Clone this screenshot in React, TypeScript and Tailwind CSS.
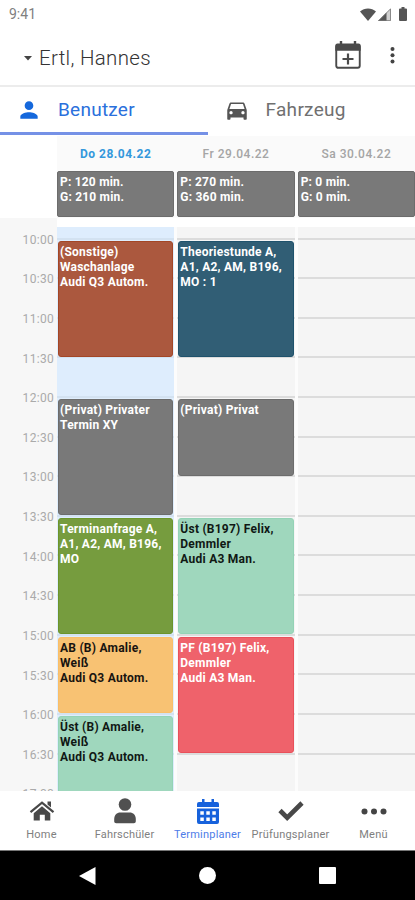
import { MdDirectionsCar, MdPerson } from 'react-icons/md';

type Appointment = {
  lines: string[];
  place: string;
  color: string;
};

type Day = {
  label: string;
  practice: string;
  total: string;
  active?: boolean;
  appointments: Appointment[];
};

const times = [
  '10:00', '10:30', '11:00', '11:30', '12:00', '12:30', '13:00', '13:30',
  '14:00', '14:30', '15:00', '15:30', '16:00', '16:30', '17:00',
];

const slots = [
  'row-start-1', 'row-start-2', 'row-start-3', 'row-start-4', 'row-start-5',
  'row-start-6', 'row-start-7', 'row-start-8', 'row-start-9', 'row-start-10',
  'row-start-11', 'row-start-12', 'row-start-13', 'row-start-14', 'row-start-15',
];

const days: Day[] = [
  {
    label: 'Do 28.04.22',
    practice: '120',
    total: '210',
    active: true,
    appointments: [
      { lines: ['(Sonstige)', 'Waschanlage', 'Audi Q3 Autom.'], place: 'row-start-2 row-span-3', color: 'bg-[#ab583e] border-[#a34626] text-white' },
      { lines: ['(Privat) Privater', 'Termin XY'], place: 'row-start-6 row-span-3', color: 'bg-[#797979] border-[#6c6c6c] text-white' },
      { lines: ['Terminanfrage A,', 'A1, A2, AM, B196,', 'MO'], place: 'row-start-9 row-span-3', color: 'bg-[#769c3e] border-[#6c942b] text-white' },
      { lines: ['AB (B) Amalie,', 'Weiß', 'Audi Q3 Autom.'], place: 'row-start-12 row-span-2', color: 'bg-[#f8c273] border-[#f9be68] text-[#181410]' },
      { lines: ['Üst (B) Amalie,', 'Weiß', 'Audi Q3 Autom.'], place: 'row-start-14 row-span-3', color: 'bg-[#9fd7bd] border-[#94d3b6] text-[#101814]' },
    ],
  },
  {
    label: 'Fr 29.04.22',
    practice: '270',
    total: '360',
    appointments: [
      { lines: ['Theoriestunde A,', 'A1, A2, AM, B196,', 'MO : 1'], place: 'row-start-2 row-span-3', color: 'bg-[#315e75] border-[#1f526c] text-white' },
      { lines: ['(Privat) Privat'], place: 'row-start-6 row-span-2', color: 'bg-[#797979] border-[#6c6c6c] text-white' },
      { lines: ['Üst (B197) Felix,', 'Demmler', 'Audi A3 Man.'], place: 'row-start-9 row-span-3', color: 'bg-[#9fd7bd] border-[#94d3b6] text-[#101814]' },
      { lines: ['PF (B197) Felix,', 'Demmler', 'Audi A3 Man.'], place: 'row-start-12 row-span-3', color: 'bg-[#ef626b] border-[#e9505a] text-white' },
    ],
  },
  { label: 'Sa 30.04.22', practice: '0', total: '0', appointments: [] },
];

function StatusBar() {
  return (
    <div className="flex h-7 items-center justify-between pl-[9px] pr-2">
      <span className="-mt-px text-[14px] leading-none text-[#808080]">9:41</span>
      <div className="-mt-px flex items-end">
        <svg className="h-[13px] w-4" viewBox="0 0 16 13" fill="#555">
          <path d="M0 3.500C4.500-.6 11.500-.6 16 3.500L8 13z" />
        </svg>
        <svg className="ml-[2px] h-[13px] w-[13px]" viewBox="0 0 13 13">
          <path d="M0 13 13 0v13z" fill="#d0d0d0" />
          <path d="M0 13 8.500 4.500V13z" fill="#555" />
          <path d="M.8 12.600 12.500.9v11.700z" fill="none" stroke="#777" strokeWidth=".8" />
        </svg>
        <svg className="ml-2 h-[14px] w-2" viewBox="0 0 8 14" fill="#555">
          <path d="M2.500 0h3v1.500H7a1 1 0 0 1 1 1V13a1 1 0 0 1-1 1H1a1 1 0 0 1-1-1V2.500a1 1 0 0 1 1-1h1.500z" />
        </svg>
      </div>
    </div>
  );
}

function AppBar() {
  return (
    <header className="flex h-[59px] items-center border-b-2 border-[#ececec] pl-6 pr-5">
      <svg className="mt-[3px] h-[5px] w-2" viewBox="0 0 8 5" fill="#444">
        <path d="M0 0h8L4 4.500z" />
      </svg>
      <h1 className="ml-[7px] mt-[3px] text-[20.5px] font-light leading-6 tracking-[0.3px] text-[#333]">Ertl, Hannes</h1>
      <svg className="-mt-[3px] ml-auto h-7 w-[26px]" viewBox="0 0 26 28" fill="none" stroke="#4a4a4a">
        <path d="M6 0v4M20 0v4" strokeWidth="2.400" />
        <rect x="1.250" y="4" width="23.500" height="22.800" rx="2" strokeWidth="1.900" />
        <path d="M2.500 2.500h21A2.200 2.200 0 0 1 25.700 4.700v5H.3v-5a2.200 2.200 0 0 1 2.200-2.200z" fill="#4a4a4a" stroke="none" />
        <path d="M13 12.500v11M7.500 18h11" strokeWidth="2.200" />
      </svg>
      <svg className="-mt-[3px] ml-[29px] h-[18px] w-[5px]" viewBox="0 0 5 18" fill="#444">
        <circle cx="2.500" cy="3" r="2" />
        <circle cx="2.500" cy="9.200" r="2" />
        <circle cx="2.500" cy="15.400" r="2" />
      </svg>
    </header>
  );
}

function Tabs() {
  return (
    <div className="grid h-12 grid-cols-2">
      <button className="flex items-center border-b-[3px] border-[#7591e6] pl-4 text-[#1568dc]">
        <MdPerson className="h-[26px] w-[26px]" />
        <span className="ml-[16px] mt-px text-[19px] leading-6 tracking-[0.25px] text-[#2a70dc]">Benutzer</span>
      </button>
      <button className="flex items-center border-b-[3px] border-transparent pl-4 text-[#555]">
        <MdDirectionsCar className="mt-px h-[26px] w-[26px]" />
        <span className="ml-[16px] mt-px text-[19px] leading-6 tracking-[0.3px] text-[#707070]">Fahrzeug</span>
      </button>
    </div>
  );
}

function DayHeader({ day }: { day: Day }) {
  return (
    <div>
      <div className={`flex h-[35px] items-center justify-center text-[12px] tracking-[0.5px] ${day.active ? 'font-bold text-[#3498dc]' : 'font-medium text-[#a5a5a5]'}`}>
        {day.label}
      </div>
      <div className="h-[46px] rounded-[2px] border border-[#6c6c6c] bg-[#797979] px-[2px] pt-[3px] text-[12px] font-bold leading-[15px] tracking-[0.2px] text-white">
        <p>P: {day.practice} min.</p>
        <p>G: {day.total} min.</p>
      </div>
    </div>
  );
}

function DayColumn({ day }: { day: Day }) {
  return (
    <div className={`grid grid-cols-1 grid-rows-[12.6px_repeat(15,39.62px)] ${day.active ? 'bg-[#deedfd]' : 'bg-[#f5f5f5]'}`}>
      {slots.map((slot) => (
        <div key={slot} className={`col-start-1 border-b-2 ${day.active ? 'border-[#d3e2f1]' : 'border-[#dcdcdc]'} ${slot}`} />
      ))}
      {day.appointments.map((item) => (
        <div
          key={item.place}
          className={`z-10 col-start-1 mx-px mb-[1.5px] mt-px overflow-hidden rounded-[3px] border pl-px pt-[3px] text-[12px] font-bold leading-[15px] tracking-[0.24px] whitespace-nowrap ${item.color} ${item.place}`}
        >
          {item.lines.map((line) => (
            <p key={line}>{line}</p>
          ))}
        </div>
      ))}
    </div>
  );
}

function Planner() {
  return (
    <main className="flex h-[656px] flex-col overflow-hidden pt-px">
      <div className="flex h-[82px] shrink-0">
        <div className="w-[57px] shrink-0" />
        <div className="grid flex-1 grid-cols-3 gap-x-[3px] bg-[#fafafa]">
          {days.map((day) => (
            <DayHeader key={day.label} day={day} />
          ))}
        </div>
      </div>
      <div className="flex min-h-0 flex-1">
        <div className="w-[57px] shrink-0 bg-[#f7f7f7] pr-[3px] pt-[2px]">
          {times.map((time) => (
            <div key={time} className="flex h-[39.62px] items-center justify-end text-[12px] tracking-[0.3px] text-[#aaa]">
              {time}
            </div>
          ))}
        </div>
        <div className="mt-[9px] grid flex-1 grid-cols-3 gap-x-[3px] overflow-hidden bg-[#fcfcfc]">
          {days.map((day) => (
            <DayColumn key={day.label} day={day} />
          ))}
        </div>
      </div>
    </main>
  );
}

function HomeIcon() {
  return (
    <svg className="h-6 w-[26px]" viewBox="0 0 26 24" fill="#484848">
      <path d="M18.500 2.500H22v6l-3.500-3z" />
      <path d="M1.500 13.200 13 3.700l11.500 9.500" fill="none" stroke="#484848" strokeWidth="2.200" />
      <path d="m13 7.300 8.300 7v7.200h-5.500v-5.700h-5v5.700H4.700v-7.200z" />
    </svg>
  );
}

function PersonIcon() {
  return (
    <svg className="h-[26px] w-6" viewBox="0 0 24 26" fill="#505050">
      <circle cx="12" cy="6.500" r="6.300" />
      <path d="M7.500 14.500h9c3.800 0 6.300 2.700 6.300 6.500v2.300c0 1.200-.8 2-2 2H3.200c-1.200 0-2-.8-2-2V21c0-3.800 2.500-6.500 6.300-6.500z" />
    </svg>
  );
}

function CalendarIcon() {
  return (
    <svg className="h-[25px] w-[22px]" viewBox="0 0 22 25" fill="#1762dc">
      <path d="M5 0h2.500v3h7V0H17v3h3a2 2 0 0 1 2 2v3H0V5a2 2 0 0 1 2-2h3z" />
      <path fillRule="evenodd" d="M0 9.500h22V23a2 2 0 0 1-2 2H2a2 2 0 0 1-2-2zM3.300 12.300v3.500h3.500v-3.500zm6 0v3.500h3.500v-3.500zm6 0v3.500h3.500v-3.500zM3.300 18.500V22h3.500v-3.500zm6 0V22h3.500v-3.500zm6 0V22h3.500v-3.500z" />
    </svg>
  );
}

function CheckIcon() {
  return (
    <svg className="h-5 w-[26px]" viewBox="0 0 26 20" fill="none" stroke="#484848" strokeWidth="4.600">
      <path d="m2 9.500 7.200 7.200L24 2" />
    </svg>
  );
}

function MoreIcon() {
  return (
    <svg className="h-[7px] w-[26px]" viewBox="0 0 26 7" fill="#444">
      <circle cx="3.500" cy="3.500" r="3" />
      <circle cx="13" cy="3.500" r="3" />
      <circle cx="22.500" cy="3.500" r="3" />
    </svg>
  );
}

const navItems = [
  { label: 'Home', icon: HomeIcon },
  { label: 'Fahrschüler', icon: PersonIcon },
  { label: 'Terminplaner', icon: CalendarIcon, active: true },
  { label: 'Prüfungsplaner', icon: CheckIcon },
  { label: 'Menü', icon: MoreIcon },
];

function BottomNav() {
  return (
    <nav className="grid h-[59px] grid-cols-5 bg-white">
      {navItems.map(({ label, icon: Icon, active }) => (
        <button key={label} className="flex flex-col items-center pt-[7px]">
          <span className="flex h-[26px] items-center">
            <Icon />
          </span>
          <span className={`mt-1 text-[11px] leading-[14px] tracking-[0.2px] whitespace-nowrap ${active ? 'text-[#4d7ce8]' : 'text-[#808080]'}`}>
            {label}
          </span>
        </button>
      ))}
    </nav>
  );
}

function SystemNav() {
  return (
    <div className="flex h-[50px] items-center justify-between border-t border-[#777] bg-black px-[79px]">
      <svg className="h-[18px] w-[17px]" viewBox="0 0 17 18" fill="white">
        <path d="M0 9 16.500 0v18z" />
      </svg>
      <div className="h-[17px] w-[17px] rounded-full bg-white" />
      <div className="h-[17px] w-[17px] rounded-[1px] bg-white" />
    </div>
  );
}

export default function App() {
  return (
    <div className="flex h-[900px] w-[415px] flex-col overflow-hidden bg-white font-['Roboto',sans-serif]">
      <StatusBar />
      <AppBar />
      <Tabs />
      <Planner />
      <BottomNav />
      <SystemNav />
    </div>
  );
}
